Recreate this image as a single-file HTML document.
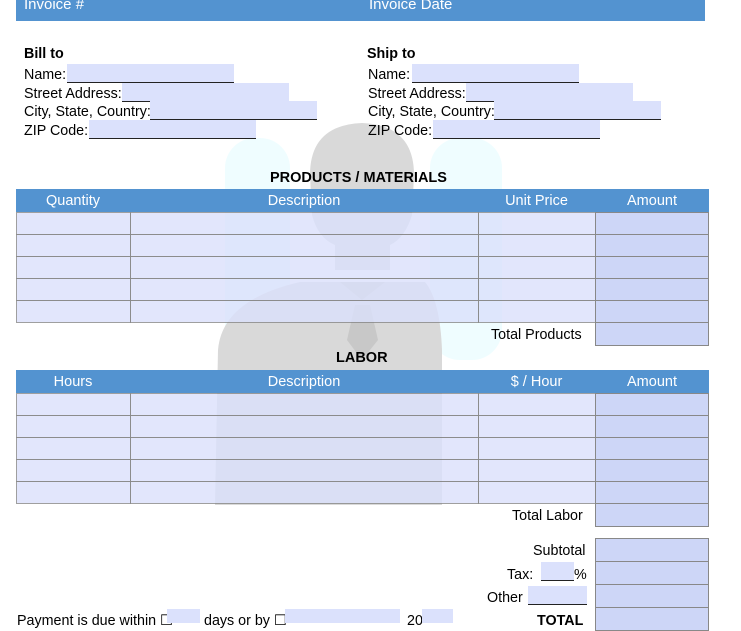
<!DOCTYPE html>
<html><head><style>
body{margin:0;width:741px;height:620px;overflow:hidden;background:#fff;font-family:"Liberation Sans",Arial,sans-serif;position:relative}
.a{position:absolute}
.t{position:absolute;font-size:14.3px;color:#000;white-space:nowrap}
.f{position:absolute;background:#dbe1fc;border-bottom:1.5px solid #222;height:18px}
.hd{position:absolute;background:#5393d0;color:#fff;font-size:14.5px;height:23px;line-height:25px;text-align:center}
.c{position:absolute;background:#dbe1fc;border:1px solid #888;box-sizing:border-box}
.am{background:#cdd6f7}
</style></head><body>
<svg class="a" style="left:0;top:0" width="741" height="620">
<g opacity="0.6">
<rect x="225" y="138" width="65" height="222" rx="30" fill="#e4fbff"/>
<rect x="430" y="138" width="72" height="222" rx="30" fill="#e4fbff"/>
</g>
<g fill="#d9d9d9">
<path d="M310 175 Q310 125 362 123 Q414 125 414 175 L412 215 Q405 238 390 245 L390 270 L335 270 L335 245 Q318 238 312 215 Z"/>
<path d="M215 505 L218 350 Q222 300 300 282 L425 282 Q440 300 442 350 L442 505 Z"/>
</g>
<path d="M340 282 L362 300 L385 282 Z M355 305 L370 305 L378 340 L362 360 L347 340 Z" fill="#c8c8c8"/>
</svg>
<div class="a" style="left:16px;top:0;width:689px;height:21px;background:#5393d0"></div>
<div class="t" style="left:24px;top:-4px;color:#fff;font-size:15px">Invoice #</div>
<div class="t" style="left:369px;top:-4px;color:#fff;font-size:15px">Invoice Date</div>

<div class="t" style="left:24px;top:46px;font-weight:bold">Bill to</div>
<div class="t" style="left:24px;top:67px">Name:</div><div class="f" style="left:67px;top:64px;width:167px"></div>
<div class="t" style="left:24px;top:86px">Street Address:</div><div class="f" style="left:122px;top:83px;width:167px"></div>
<div class="t" style="left:24px;top:104px">City, State, Country:</div><div class="f" style="left:150px;top:101px;width:167px"></div>
<div class="t" style="left:24px;top:123px">ZIP Code:</div><div class="f" style="left:89px;top:120px;width:167px"></div>

<div class="t" style="left:367px;top:46px;font-weight:bold">Ship to</div>
<div class="t" style="left:368px;top:67px">Name:</div><div class="f" style="left:412px;top:64px;width:167px"></div>
<div class="t" style="left:368px;top:86px">Street Address:</div><div class="f" style="left:466px;top:83px;width:167px"></div>
<div class="t" style="left:368px;top:104px">City, State, Country:</div><div class="f" style="left:494px;top:101px;width:167px"></div>
<div class="t" style="left:368px;top:123px">ZIP Code:</div><div class="f" style="left:433px;top:120px;width:167px"></div>

<div class="t" style="left:270px;top:170px;font-weight:bold;font-size:14.5px">PRODUCTS / MATERIALS</div>
<div class="hd" style="left:16px;top:189px;width:693px"></div>
<div class="hd" style="left:16px;top:189px;width:114px">Quantity</div>
<div class="hd" style="left:130px;top:189px;width:348px">Description</div>
<div class="hd" style="left:478px;top:189px;width:117px">Unit Price</div>
<div class="hd" style="left:595px;top:189px;width:114px">Amount</div>
<div id="p"></div>
<div class="t" style="left:491px;top:327px">Total Products</div>

<div class="t" style="left:336px;top:350px;font-weight:bold;font-size:14.5px">LABOR</div>
<div class="hd" style="left:16px;top:370px;width:693px"></div>
<div class="hd" style="left:16px;top:370px;width:114px">Hours</div>
<div class="hd" style="left:130px;top:370px;width:348px">Description</div>
<div class="hd" style="left:478px;top:370px;width:117px">$ / Hour</div>
<div class="hd" style="left:595px;top:370px;width:114px">Amount</div>
<div class="t" style="left:512px;top:508px">Total Labor</div>

<div class="t" style="left:533px;top:543px">Subtotal</div>
<div class="t" style="left:507px;top:567px">Tax:</div><div class="f" style="left:541px;top:562px;width:33px"></div><div class="t" style="left:574px;top:567px">%</div>
<div class="t" style="left:487px;top:590px">Other</div><div class="f" style="left:528px;top:586px;width:59px"></div>
<div class="t" style="left:537px;top:613px;font-weight:bold">TOTAL</div>
<div class="t" style="left:17px;top:613px">Payment is due within ☐</div>
<div class="a" style="left:167px;top:609px;width:33px;height:14px;background:#dbe1fc"></div>
<div class="t" style="left:204px;top:613px">days or by ☐</div>
<div class="a" style="left:285px;top:609px;width:115px;height:14px;background:#dbe1fc"></div>
<div class="t" style="left:407px;top:613px">20</div>
<div class="a" style="left:422px;top:609px;width:31px;height:14px;background:#dbe1fc"></div>
<script>
var h='';
function rows(y0,n){for(var i=0;i<n;i++){var y=y0+i*22;
h+='<div class="c" style="left:16px;top:'+y+'px;width:115px;height:23px;opacity:.8"></div>';
h+='<div class="c" style="left:130px;top:'+y+'px;width:349px;height:23px;opacity:.8"></div>';
h+='<div class="c" style="left:478px;top:'+y+'px;width:118px;height:23px;opacity:.8"></div>';
h+='<div class="c am" style="left:595px;top:'+y+'px;width:114px;height:23px"></div>';}}
rows(212,5);rows(393,5);
h+='<div class="c am" style="left:595px;top:322px;width:114px;height:24px"></div>';
h+='<div class="c am" style="left:595px;top:503px;width:114px;height:24px"></div>';
[538,561,584,607].forEach(function(y){h+='<div class="c am" style="left:595px;top:'+y+'px;width:114px;height:24px"></div>'});
document.getElementById('p').innerHTML=h;
</script>
</body></html>
